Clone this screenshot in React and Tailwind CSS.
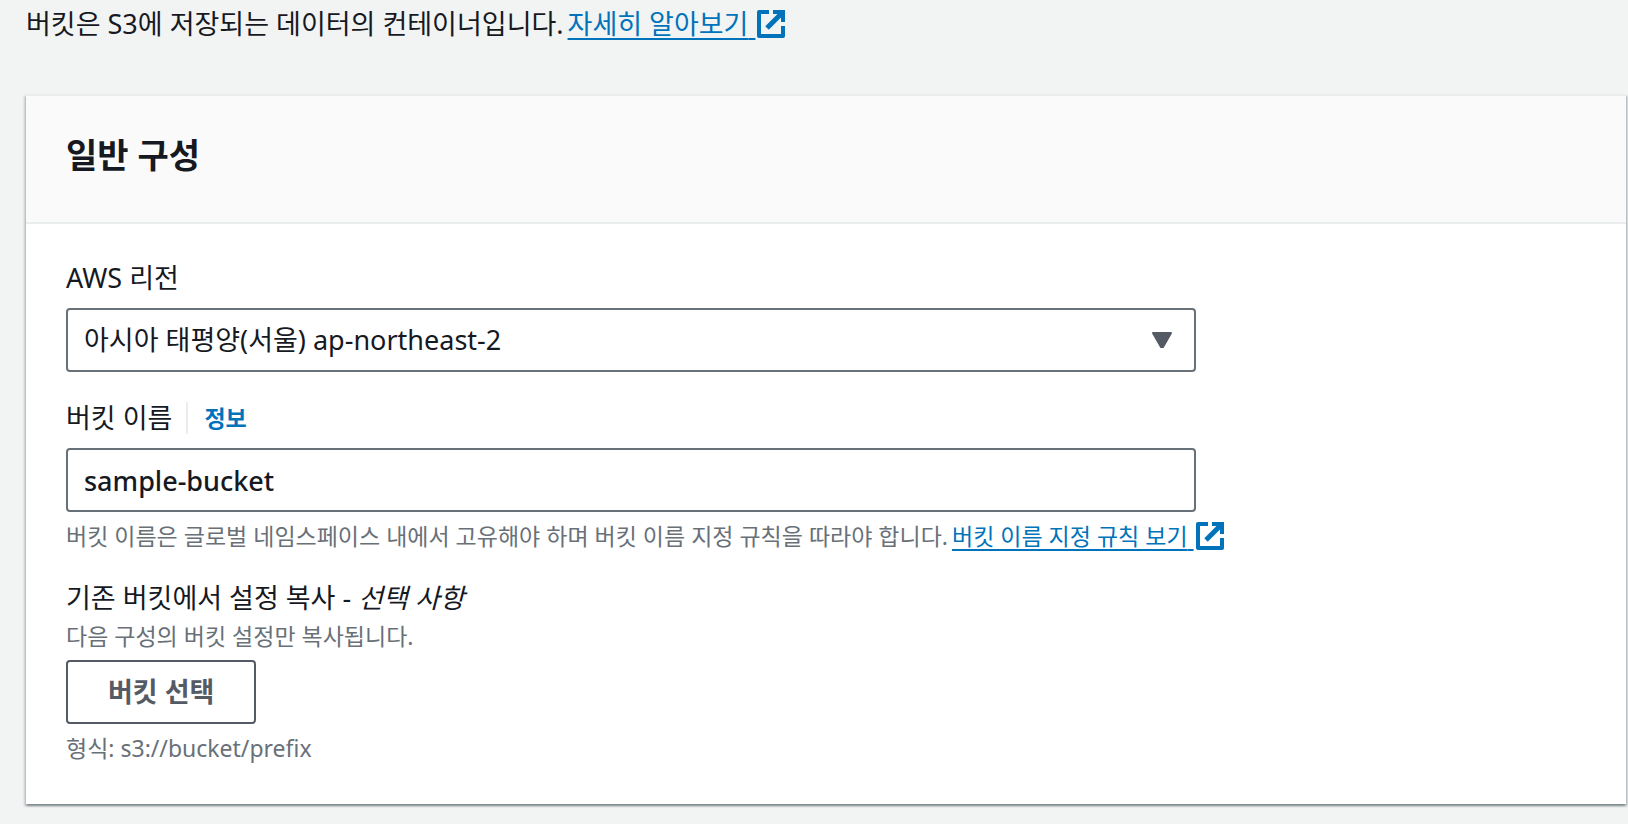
import React from "react";

function ExternalIcon() {
  return (
    <svg viewBox="0 0 28 28" className="h-7 w-7 shrink-0" fill="none" stroke="currentColor" strokeWidth="4" aria-hidden="true">
      <path d="M12 2H2v24h24V16" strokeLinejoin="round" />
      <path d="M16 2h10v10" />
      <path d="M10 18 25 3" strokeWidth="5" />
    </svg>
  );
}

function ExternalLink({ children }) {
  return (
    <a href="#" className="inline-flex items-center gap-0.5 text-[#0073bb]">
      <span className="whitespace-pre underline decoration-2 underline-offset-4">{children} </span>
      <ExternalIcon />
    </a>
  );
}

const fieldBox =
  "block h-16 w-full appearance-none rounded border-2 border-[#687078] bg-white px-4 text-[27px] text-[#16191f] outline-none";
const hint = "text-[23px] leading-8 text-[#687078]";

export default function App() {
  return (
    <div className="min-h-screen bg-[#f2f3f3] pr-0.5 pb-4 pl-[26px] font-['Noto_Sans','Noto_Sans_CJK_KR',sans-serif] text-[27px] leading-9 text-[#16191f]">
      <p className="flex flex-wrap items-center gap-x-1 pt-1.5">
        <span>버킷은 S3에 저장되는 데이터의 컨테이너입니다.</span>
        <ExternalLink>자세히 알아보기</ExternalLink>
      </p>

      <section className="mt-[52px] border-t-2 border-[#eaeded] bg-white shadow-[0_2px_2px_0_rgba(0,28,36,0.3),2px_2px_2px_0_rgba(0,28,36,0.15),-2px_2px_2px_0_rgba(0,28,36,0.15)]">
        <header className="border-b-2 border-[#eaeded] bg-[#fafafa] px-10 pt-[38px] pb-[46px]">
          <h2 className="text-[34px] leading-[42px] font-bold">일반 구성</h2>
        </header>

        <div className="px-10 pt-9 pb-10">
          <div className="max-w-[1130px]">
            <label htmlFor="region" className="block">AWS 리전</label>
            <div className="relative mt-3">
              <select id="region" className={fieldBox}>
                <option>아시아 태평양(서울) ap-northeast-2</option>
              </select>
              <svg viewBox="0 0 20 16" className="pointer-events-none absolute top-6 right-6 h-4 w-5" fill="#545b64" stroke="#545b64" strokeWidth="2" strokeLinejoin="round" aria-hidden="true">
                <path d="M1 1h18l-8 14h-2z" />
              </svg>
            </div>
          </div>

          <div className="mt-7 max-w-[1130px]">
            <div className="flex items-center">
              <label htmlFor="bucket">버킷 이름</label>
              <a href="#" className="ml-3.5 border-l-2 border-[#eaeded] pl-4 text-[23px] leading-8 font-bold text-[#0073bb]">정보</a>
            </div>
            <input id="bucket" type="text" defaultValue="sample-bucket" className={`mt-3 font-medium ${fieldBox}`} />
          </div>
          <p className={`mt-2 flex flex-wrap items-center gap-x-1 ${hint}`}>
            <span>버킷 이름은 글로벌 네임스페이스 내에서 고유해야 하며 버킷 이름 지정 규칙을 따라야 합니다.</span>
            <ExternalLink>버킷 이름 지정 규칙 보기</ExternalLink>
          </p>

          <div className="mt-7">
            <h3>기존 버킷에서 설정 복사 - <em>선택 사항</em></h3>
            <p className={`mt-1 ${hint}`}>다음 구성의 버킷 설정만 복사됩니다.</p>
            <button type="button" className="mt-2 h-16 rounded border-2 border-[#545b64] bg-white px-10 text-[27px] font-bold text-[#545b64]">버킷 선택</button>
            <p className={`mt-2 ${hint}`}>형식: s3://bucket/prefix</p>
          </div>
        </div>
      </section>
    </div>
  );
}
